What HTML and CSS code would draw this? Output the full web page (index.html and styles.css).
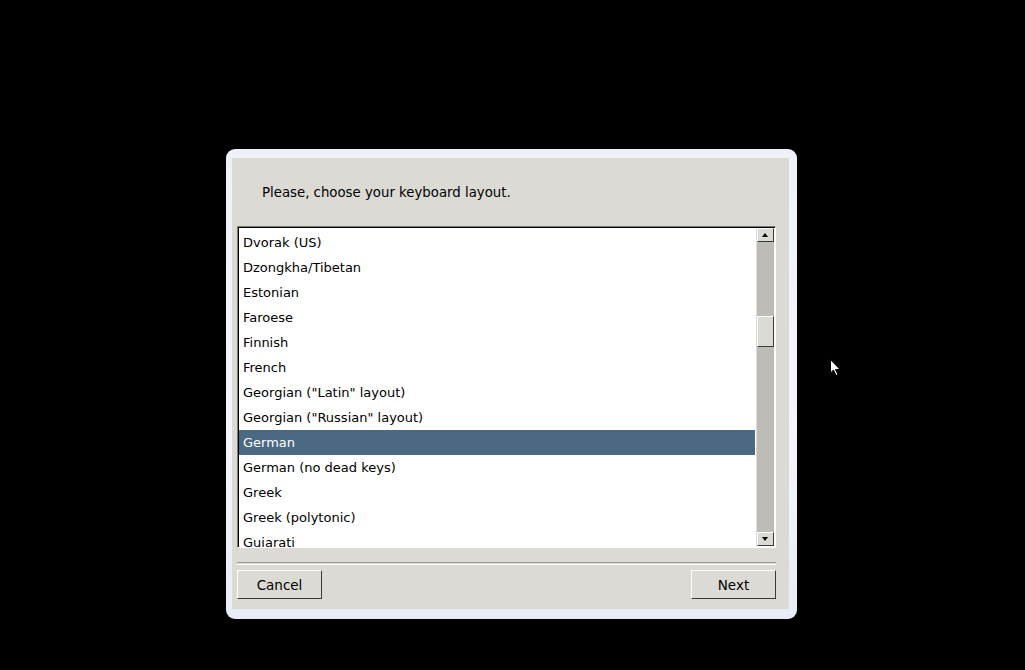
FILE: index.html
```html
<!DOCTYPE html>
<html lang="en">
<head>
  <meta charset="UTF-8">
  <title>Keyboard layout</title>
  <link rel="stylesheet" href="styles.css">
</head>
<body>
  <div class="screen">
    <div class="window">
      <div class="dialog">
        <p class="prompt">Please, choose your keyboard layout.</p>

        <div class="listbox">
          <ul class="items">
            <li>Dvorak (US)</li>
            <li>Dzongkha/Tibetan</li>
            <li>Estonian</li>
            <li>Faroese</li>
            <li>Finnish</li>
            <li>French</li>
            <li>Georgian ("Latin" layout)</li>
            <li>Georgian ("Russian" layout)</li>
            <li class="selected">German</li>
            <li>German (no dead keys)</li>
            <li>Greek</li>
            <li>Greek (polytonic)</li>
            <li>Gujarati</li>
          </ul>
          <div class="scrollbar">
            <div class="arrow up"></div>
            <div class="track">
              <div class="thumb"></div>
            </div>
            <div class="arrow down"></div>
          </div>
        </div>

        <div class="separator"></div>

        <div class="buttons">
          <button class="btn">Cancel</button>
          <button class="btn">Next</button>
        </div>
      </div>
    </div>

    <svg class="cursor" width="12" height="18" viewBox="0 0 12 18">
      <path d="M0.5 0.5 L0.5 14 L3.5 11 L6 16.5 L8 15.5 L5.5 10.5 L10 10.5 Z" fill="#fff" stroke="#000" stroke-width="1"/>
    </svg>
  </div>
</body>
</html>
```

FILE: styles.css
```css
html, body {
  margin: 0;
  padding: 0;
  background: #000;
}
.screen {
  position: relative;
  width: 1025px;
  height: 670px;
  background: #000;
  font-family: 'DejaVu Sans', sans-serif;
  font-size: 13px;
  color: #000;
}
.window {
  position: absolute;
  left: 226px;
  top: 149px;
  width: 571px;
  height: 470px;
  box-sizing: border-box;
  padding: 9px 8px 10px 6px;
  border-radius: 9px;
  background: linear-gradient(180deg, #eef1f8 0%, #f4f6fb 60%, #e8ecf5 100%);
}
.dialog {
  height: 100%;
  background: #dcdad5;
  display: flex;
  flex-direction: column;
  padding: 0 13px 0 5px;
  box-sizing: border-box;
}
.prompt {
  margin: 0;
  padding: 26px 0 0 25px;
  height: 42px;
  line-height: 18px;
  font-size: 13.3px;
  box-sizing: content-box;
}
.listbox {
  margin-top: 0;
  height: 322px;
  box-sizing: border-box;
  border: 1px solid;
  border-color: #7c7a76 #fff #fff #7c7a76;
  display: flex;
  background: #fff;
  box-shadow: inset 1px 1px 0 #000;
}
.items {
  list-style: none;
  margin: 0;
  padding: 3px 1px 0 1px;
  flex: 1;
  overflow: hidden;
}
.items li {
  height: 25px;
  line-height: 25px;
  padding-left: 4px;
}
.items li.selected {
  background: #4b6983;
  color: #fff;
}
.scrollbar {
  width: 17px;
  margin: 1px 1px 1px 0;
  background: #bebcb7;
  display: flex;
  flex-direction: column;
  border-left: 1px solid #dcdad5;
}
.arrow {
  height: 14px;
  box-sizing: border-box;
  background: #dcdad5;
  border: 1px solid;
  border-color: #fff #3a3a38 #3a3a38 #fff;
  position: relative;
}
.arrow::after {
  content: "";
  position: absolute;
  left: 4px;
  top: 4px;
  border-left: 3.5px solid transparent;
  border-right: 3.5px solid transparent;
}
.arrow.up::after {
  border-bottom: 4px solid #000;
}
.arrow.down::after {
  border-top: 4px solid #000;
}
.track {
  flex: 1;
  padding-top: 74px;
}
.thumb {
  height: 31px;
  box-sizing: border-box;
  background: #dcdad5;
  border: 1px solid;
  border-color: #fff #3a3a38 #3a3a38 #fff;
}
.separator {
  margin-top: 14px;
  height: 1px;
  border-top: 1px solid #9a9893;
  border-bottom: 1px solid #fff;
}
.buttons {
  display: flex;
  justify-content: space-between;
  margin-top: 5px;
}
.btn {
  width: 85px;
  height: 29px;
  box-sizing: border-box;
  font-family: 'DejaVu Sans', sans-serif;
  font-size: 13.5px;
  color: #000;
  background: #dcdad5;
  border: 1px solid;
  border-color: #fff #3a3a38 #3a3a38 #fff;
  padding: 0;
}
.cursor {
  position: absolute;
  left: 830px;
  top: 359px;
}
```
